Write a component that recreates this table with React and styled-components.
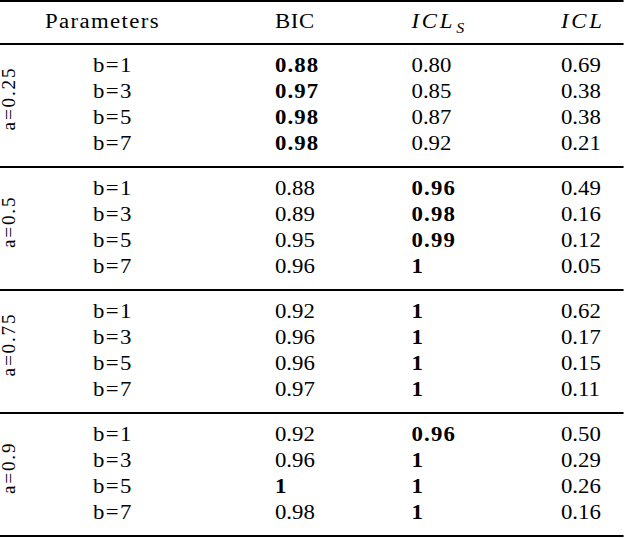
import styled, { createGlobalStyle } from "styled-components";

const GlobalStyle = createGlobalStyle`
  html, body {
    margin: 0;
    background: #fff;
  }
  body {
    font-family: "Liberation Serif", "Times New Roman", serif;
    color: #000;
  }
`;

// "*" marks a bold (best) value
const groups = [
  {
    a: "0.25",
    rows: [
      ["b=1", "*0.88", "0.80", "0.69"],
      ["b=3", "*0.97", "0.85", "0.38"],
      ["b=5", "*0.98", "0.87", "0.38"],
      ["b=7", "*0.98", "0.92", "0.21"],
    ],
  },
  {
    a: "0.5",
    rows: [
      ["b=1", "0.88", "*0.96", "0.49"],
      ["b=3", "0.89", "*0.98", "0.16"],
      ["b=5", "0.95", "*0.99", "0.12"],
      ["b=7", "0.96", "*1", "0.05"],
    ],
  },
  {
    a: "0.75",
    rows: [
      ["b=1", "0.92", "*1", "0.62"],
      ["b=3", "0.96", "*1", "0.17"],
      ["b=5", "0.96", "*1", "0.15"],
      ["b=7", "0.97", "*1", "0.11"],
    ],
  },
  {
    a: "0.9",
    rows: [
      ["b=1", "0.92", "*0.96", "0.50"],
      ["b=3", "0.96", "*1", "0.29"],
      ["b=5", "*1", "*1", "0.26"],
      ["b=7", "0.98", "*1", "0.16"],
    ],
  },
];

const COLS = "81.6px 159.6px 119.8px 131.1px 1fr";

function App() {
  return (
    <>
      <GlobalStyle />
      <Table>
        <Header>
          <ParamHead>Parameters</ParamHead>
          <HeadCell>BIC</HeadCell>
          <MathHead>
            ICL<sub>S</sub>
          </MathHead>
          <MathHead>ICL</MathHead>
        </Header>
        {groups.map((g) => (
          <Group key={g.a}>
            <Label>a={g.a}</Label>
            {g.rows.map((row) =>
              row.map((cell, i) => {
                const bold = cell.startsWith("*");
                return (
                  <Cell key={row[0] + i} $bold={bold} $text={i === 0}>
                    {bold ? cell.slice(1) : cell}
                  </Cell>
                );
              })
            )}
          </Group>
        ))}
      </Table>
    </>
  );
}

const Table = styled.div`
  width: 547.4px;
  transform: scaleX(1.14);
  transform-origin: 0 0;
  border-top: 2px solid #000;
  border-bottom: 2px solid #000;
  font-size: 20px;
`;

const Header = styled.div`
  display: grid;
  grid-template-columns: ${COLS};
  align-items: center;
  height: 43px;
  padding-bottom: 3px;
  box-sizing: border-box;
  border-bottom: 2px solid #000;
  line-height: 26px;
`;

const HeadCell = styled.div`
  letter-spacing: 0.6px;
`;

const ParamHead = styled(HeadCell)`
  grid-column: 1 / 3;
  padding-left: 39.5px;
  letter-spacing: 1.2px;
`;

const MathHead = styled.div`
  font-style: italic;
  letter-spacing: 2.4px;

  sub {
    font-size: 14px;
    line-height: 0;
    vertical-align: -5px;
    letter-spacing: 0;
    margin-left: 1px;
  }
`;

const Group = styled.div`
  display: grid;
  grid-template-columns: ${COLS};
  grid-template-rows: repeat(4, 26px);
  padding: 7px 0 10px;
  line-height: 26px;

  &:first-of-type {
    padding: 9px 0 9px;
  }

  & + & {
    border-top: 2px solid #000;
  }
`;

const Label = styled.div`
  grid-column: 1;
  grid-row: 1 / 5;
  align-self: center;
  justify-self: start;
  margin-top: -10px;
  writing-mode: vertical-rl;
  transform: rotate(180deg) scaleY(1.2);
  font-size: 16px;
  line-height: 16px;
  letter-spacing: 1.5px;
`;

const Cell = styled.div`
  font-weight: ${({ $bold }) => ($bold ? 700 : 400)};
  letter-spacing: ${({ $bold, $text }) =>
    $text ? "1.2px" : $bold ? "1px" : "0"};
`;

export default App;
